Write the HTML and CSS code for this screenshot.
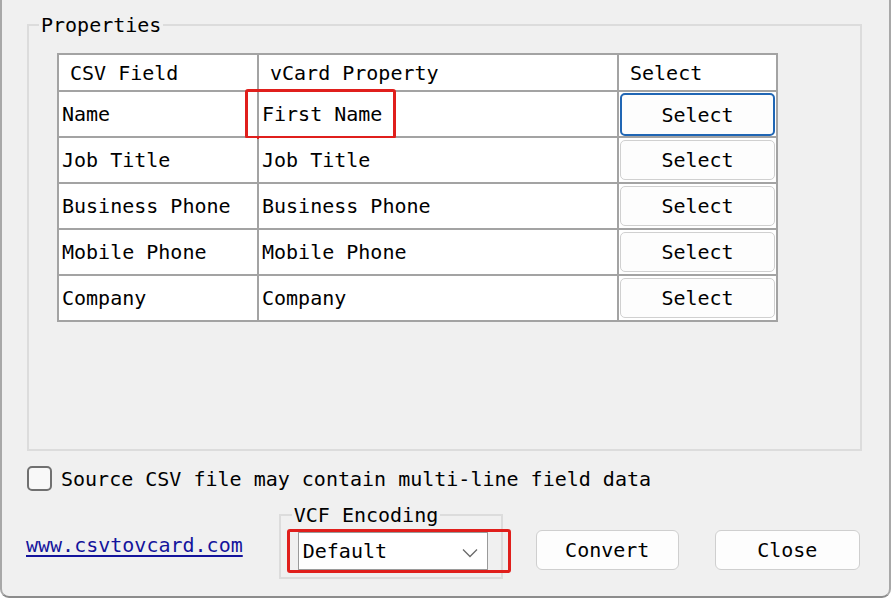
FILE: index.html
```html
<!DOCTYPE html>
<html>
<head>
<meta charset="utf-8">
<link rel="stylesheet" href="styles.css">
</head>
<body>
<div class="window">
  <fieldset class="group props">
    <legend>Properties</legend>
    <div class="grid">
      <div class="cell head">CSV Field</div>
      <div class="cell head">vCard Property</div>
      <div class="cell head">Select</div>

      <div class="cell">Name</div>
      <div class="cell marked">First Name<span class="annot annot-cell"></span></div>
      <div class="cell btncell"><button class="btn sel focused">Select</button></div>

      <div class="cell">Job Title</div>
      <div class="cell">Job Title</div>
      <div class="cell btncell"><button class="btn sel">Select</button></div>

      <div class="cell">Business Phone</div>
      <div class="cell">Business Phone</div>
      <div class="cell btncell"><button class="btn sel">Select</button></div>

      <div class="cell">Mobile Phone</div>
      <div class="cell">Mobile Phone</div>
      <div class="cell btncell"><button class="btn sel">Select</button></div>

      <div class="cell">Company</div>
      <div class="cell">Company</div>
      <div class="cell btncell"><button class="btn sel">Select</button></div>
    </div>
  </fieldset>

  <label class="checkrow">
    <span class="checkbox"></span>
    <span>Source CSV file may contain multi-line field data</span>
  </label>

  <div class="bottom">
    <a class="link" href="#">www.csvtovcard.com</a>
    <fieldset class="group enc">
      <legend>VCF Encoding</legend>
      <div class="combo">
        <span>Default</span>
        <svg class="chev" width="16" height="10" viewBox="0 0 16 10"><polyline points="1,1.5 8,8.5 15,1.5" fill="none" stroke="#6a6a6a" stroke-width="1.3"/></svg>
        <span class="annot annot-combo"></span>
      </div>
    </fieldset>
    <button class="btn action convert">Convert</button>
    <button class="btn action close">Close</button>
  </div>
</div>
</body>
</html>
```

FILE: styles.css
```css
html, body {
  margin: 0;
  background: #ffffff;
}
body {
  font-family: "DejaVu Sans Mono", "Liberation Mono", monospace;
  font-size: 20px;
  line-height: 24px;
  color: #000;
}
.window {
  box-sizing: border-box;
  width: 891px;
  height: 598px;
  background: #f0f0f0;
  border-left: 2px solid #a8a8a8;
  border-right: 2px solid #a8a8a8;
  border-bottom: 2px solid #8c8c8c;
  border-radius: 0 0 9px 9px;
  overflow: hidden;
}
.group {
  border: 2px solid #dcdcdc;
  padding: 0;
  min-width: 0;
}
.group legend {
  padding: 0 2px;
  line-height: 24px;
}
.props {
  margin: 13px 0 0 25px;
  width: 835px;
  box-sizing: border-box;
}
.props legend {
  margin-left: 10px;
}
.grid {
  box-sizing: border-box;
  margin: 16px 0 127px 28px;
  width: 721px;
  display: grid;
  grid-template-columns: 198px 358px 157px;
  grid-template-rows: 35px repeat(5, 44px);
  gap: 2px;
  padding: 2px;
  background: #a3a3a3;
}
.cell {
  background: #fff;
  display: flex;
  align-items: center;
  padding-left: 3px;
  white-space: nowrap;
  position: relative;
}
.cell.head {
  padding-left: 11px;
}
.cell.btncell {
  padding: 2px 1px 2px 1px;
  align-items: stretch;
}
.btn {
  font-family: inherit;
  font-size: 20px;
  color: #000;
  background: #fdfdfd;
  border: 1px solid #d0d0d0;
  border-radius: 5px;
  padding: 0;
  margin: 0;
}
.btn.sel {
  width: 100%;
}
.btn.sel.focused {
  border: 2px solid #2066b4;
  margin: -1px 0 0 0;
  height: 43px;
}
.annot {
  position: absolute;
  border: 3px solid #e01f1c;
  border-radius: 3px;
  pointer-events: none;
}
.annot-cell {
  left: -14px;
  top: -3px;
  width: 151px;
  height: 50px;
  box-sizing: border-box;
}
.checkrow {
  display: flex;
  align-items: center;
  gap: 9px;
  margin: 15px 0 0 25px;
}
.checkbox {
  box-sizing: border-box;
  width: 25px;
  height: 25px;
  border: 2px solid #707070;
  border-radius: 5px;
  background: #f8f8f8;
}
.bottom {
  display: flex;
  align-items: flex-start;
  margin-top: 12px;
}
.link {
  margin: 30px 0 0 24px;
  color: #14149c;
  text-decoration: underline;
  text-underline-offset: 3px;
}
.enc {
  margin: 0 0 0 36px;
  padding: 0 13px 7px 17px;
}
.enc legend {
  margin-left: -6px;
}
.combo {
  position: relative;
  box-sizing: border-box;
  width: 190px;
  height: 38px;
  margin-top: 5px;
  background: #fff;
  border: 1px solid #9a9a9a;
  display: flex;
  align-items: center;
  justify-content: space-between;
  padding: 0 9px 0 4px;
}
.chev {
  margin-top: 3px;
}
.annot-combo {
  left: -12px;
  right: -24px;
  top: -4px;
  bottom: -4px;
}
.btn.action {
  height: 40px;
  margin-top: 27px;
  border-color: #cfcfcf;
  border-radius: 6px;
}
.convert {
  width: 143px;
  margin-left: 33px;
}
.close {
  width: 145px;
  margin-left: 36px;
}
```
